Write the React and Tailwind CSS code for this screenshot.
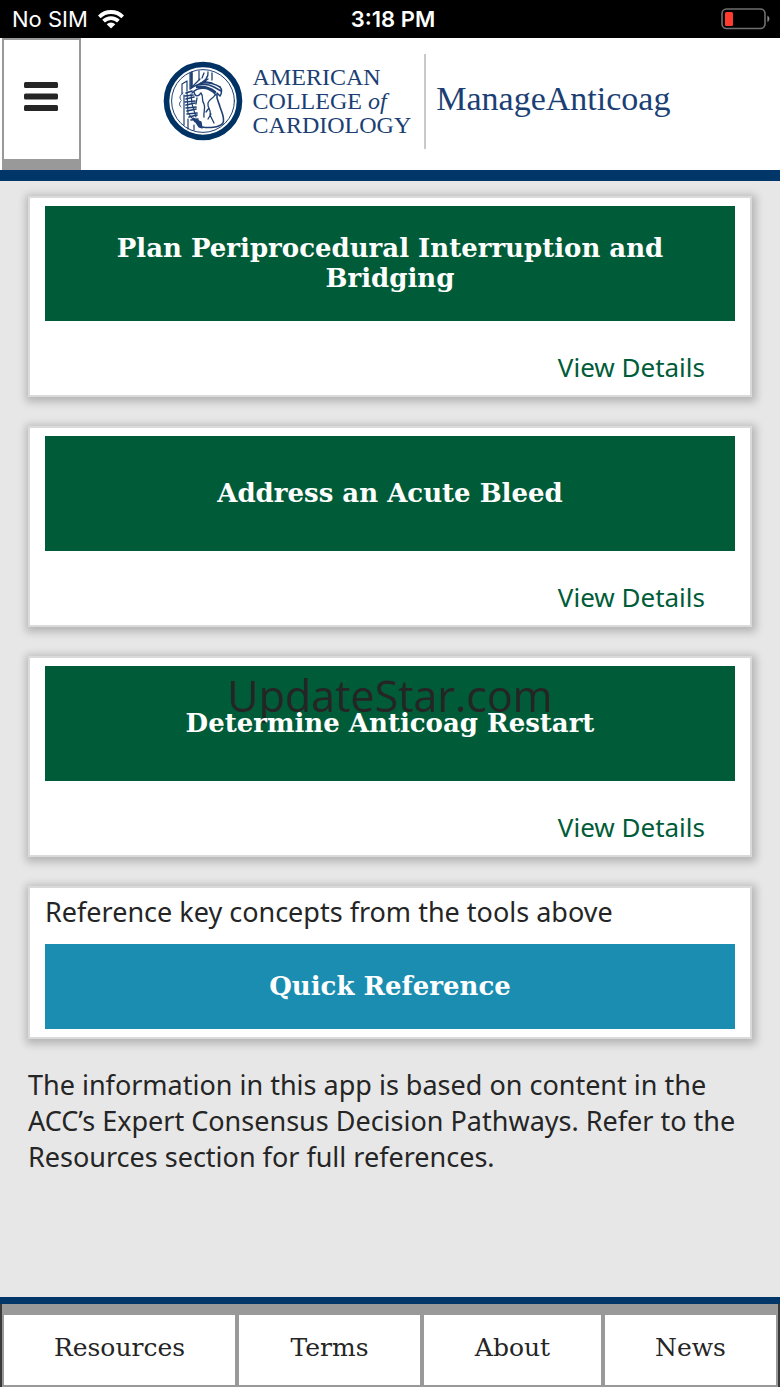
const tools = [
  { id: "plan", title: "Plan Periprocedural Interruption and Bridging" },
  { id: "bleed", title: "Address an Acute Bleed" },
  { id: "restart", title: "Determine Anticoag Restart", watermark: true },
];

const tabs = ["Resources", "Terms", "About", "News"];

export default function App() {
  return (
    <div className="min-h-screen flex flex-col bg-[#e7e7e7] text-[#252525] font-['Noto_Sans',sans-serif]">
      <StatusBar />
      <Header />

      <main className="flex-1 px-7 pt-[15px] pb-8">
        <div className="flex flex-col gap-[29px]">
          {tools.map((tool) => (
            <ToolCard key={tool.id} tool={tool} />
          ))}

          <section className="bg-white border-2 border-[#dadada] shadow-[1px_2px_8px_3px_rgba(0,0,0,0.22)] px-[15px] pt-[6px] pb-2">
            <p className="text-[27px] leading-9 mb-[14px]">Reference key concepts from the tools above</p>
            <button
              type="button"
              className="w-full h-[85px] pb-[2px] bg-[#1a8db0] text-white font-bold text-[26px] leading-[30px] font-['Roboto_Slab','DejaVu_Serif',serif]"
            >
              Quick Reference
            </button>
          </section>
        </div>

        <p className="mt-7 text-[27px] leading-9">
          The information in this app is based on content in the ACC’s Expert Consensus Decision Pathways. Refer to the
          Resources section for full references.
        </p>
      </main>

      <nav className="border-t-[7px] border-[#003768] bg-[#3a3a3a] px-[2px]">
        <div className="grid grid-cols-[235fr_185fr_181fr_175fr]">
          {tabs.map((tab) => (
            <a
              key={tab}
              href={`#${tab.toLowerCase()}`}
              className="h-[83px] flex items-center justify-center bg-white border-2 border-t-[11px] border-[#999999] pb-1 text-[25px] leading-8 font-['Roboto_Slab','DejaVu_Serif',serif]"
            >
              {tab}
            </a>
          ))}
        </div>
      </nav>
    </div>
  );
}

function StatusBar() {
  return (
    <div className="h-[38px] bg-black text-white grid grid-cols-3 items-center pl-3 pr-[10px] font-['Inter',sans-serif] text-[22px] leading-7">
      <div className="flex items-center gap-[10px]">
        <span>No SIM</span>
        <svg width="26" height="19" viewBox="0 0 26 19" fill="none" stroke="white" strokeWidth="3.8">
          <path d="M1.3 6.8a16.6 16.6 0 0 1 23.4 0" />
          <path d="M5.6 11.2a10.5 10.5 0 0 1 14.8 0" />
          <path d="M13 18.6l-4.3-4.3a6.1 6.1 0 0 1 8.6 0z" fill="white" stroke="none" />
        </svg>
      </div>
      <span className="pl-1 text-center font-semibold">3:18 PM</span>
      <svg className="justify-self-end" width="49" height="22" viewBox="0 0 49 22" fill="none">
        <rect x="1" y="1" width="43" height="19.5" rx="4.5" stroke="#6f6f6f" strokeWidth="1.6" />
        <rect x="4" y="4" width="8" height="14" rx="1.5" fill="#ff3b30" />
        <path d="M46.4 7.5c2.6 1.6 2.6 5 0 6.6z" fill="#8a8a8a" />
      </svg>
    </div>
  );
}

function Header() {
  return (
    <header className="flex bg-white border-b-[11px] border-[#003768] pl-[2px]">
      <button
        type="button"
        aria-label="Menu"
        className="w-[79px] h-[132px] shrink-0 flex items-center justify-center bg-white border-2 border-b-[11px] border-[#999999] pb-[6px] pr-[2px]"
      >
        <svg width="34" height="30" viewBox="0 0 34 30" fill="#252525">
          <rect y="0" width="34" height="6" rx="1.5" />
          <rect y="11.5" width="34" height="6" rx="1.5" />
          <rect y="23" width="34" height="6" rx="1.5" />
        </svg>
      </button>
      <div className="flex-1 flex items-center justify-center pr-7 pb-[6px] text-[#1b3f74] font-['Liberation_Serif',serif]">
        <AccSeal />
        <div className="ml-[10px] mr-[13px] text-2xl leading-6 whitespace-nowrap">
          <div>AMERICAN</div>
          <div>
            COLLEGE <em>of</em>
          </div>
          <div>CARDIOLOGY</div>
        </div>
        <div className="border-l-2 border-[#c9c9c9] h-[95px] flex items-center pl-[10px] pb-1">
          <h1 className="text-[34px] leading-10">ManageAnticoag</h1>
        </div>
      </div>
    </header>
  );
}

function AccSeal() {
  return (
    <svg className="shrink-0" width="80" height="80" viewBox="0 0 80 80" fill="none" stroke="#1d3f73" strokeLinecap="round" strokeLinejoin="round">
      <circle cx="40" cy="40" r="36.5" fill="white" stroke="#003263" strokeWidth="5.6" />
      <circle cx="40" cy="40" r="31.4" strokeWidth="1" />
      {/* vessels running behind the heart */}
      <path d="M19 23l5-3v10M19 23v10M21 34v30M25 58v10M31 64v5" strokeWidth="1.2" />
      <path d="M20 32c-3 2-4 5-2 7M18 40c-2 2-2 4 0 6" strokeWidth="1" />
      <path d="M27 12v15M36 10v9" strokeWidth="1.2" />
      <path d="M28.5 12v14" strokeWidth="2.6" />
      {/* great vessels */}
      <path d="M37 18l-9 9M45 11c1 6-4 10-11 13M45 18l-7 5M49 12v7M43 21l6 1M41 12l-2 5" strokeWidth="1.3" />
      <path d="M27 28c7-6 17-6 24-2l7 4M29 32c7-7 17-6 24 2M38 22c8-1 14 1 19 4" strokeWidth="1.5" />
      <path d="M57 26c2 2 2 6 0 9l-3-3" strokeWidth="1.5" />
      <path d="M34 26c7-1 13 1 18 5" strokeWidth="2.4" />
      {/* shaded side */}
      <path d="M23 32l6-2M22 35l8-1M23 38l8-2M22 41l10-1M23 44l9-2M23 47l10-1M24 50l9-2M24 53l10-1M26 56l8-2M28 59l7-1" strokeWidth="1.7" />
      <path d="M24 31l1 21 7 9M28 33l1 10 4 13" strokeWidth="1.1" />
      <path d="M30 57l8 4 1 6-3-1z" fill="#1d3f73" strokeWidth="1.3" />
      {/* ventricle outline and coronary branches */}
      <path d="M54 33c-1 5 2 8 3 13 2 6 5 11 3 16-4 5-15 5-21 4" strokeWidth="1.6" />
      <path d="M31 31c1 5 4 5 7 1M38 32c3 4 0 7 3 11 2 5-1 8 0 13" strokeWidth="1.3" />
      <path d="M52 34c-2 4-6 4-7 8-1 5 4 7 2 12l4 8M46 47l-3 4M48 53l-3 5M34 37l-1 6" strokeWidth="1.3" />
    </svg>
  );
}

function ToolCard({ tool }) {
  return (
    <section className="relative bg-white border-2 border-[#dadada] shadow-[1px_2px_8px_3px_rgba(0,0,0,0.22)] px-[15px] pt-2 pb-[10px]">
      {tool.watermark && (
        <span className="absolute inset-x-0 top-2 text-center text-[43px] leading-[60px] text-[#252525] font-['Open_Sans',sans-serif] pointer-events-none">
          UpdateStar.com
        </span>
      )}
      <button
        type="button"
        className="w-full h-[115px] px-8 pb-[2px] bg-[#005c38] text-white font-bold text-[26px] leading-[30px] font-['Roboto_Slab','DejaVu_Serif',serif]"
      >
        {/* title stays above the watermark */}
        <span className="relative">{tool.title}</span>
      </button>
      <div className="flex justify-end pt-7 pr-[30px]">
        <a href={`#${tool.id}`} className="text-[26px] leading-9 text-[#005c38]">
          View Details
        </a>
      </div>
    </section>
  );
}
